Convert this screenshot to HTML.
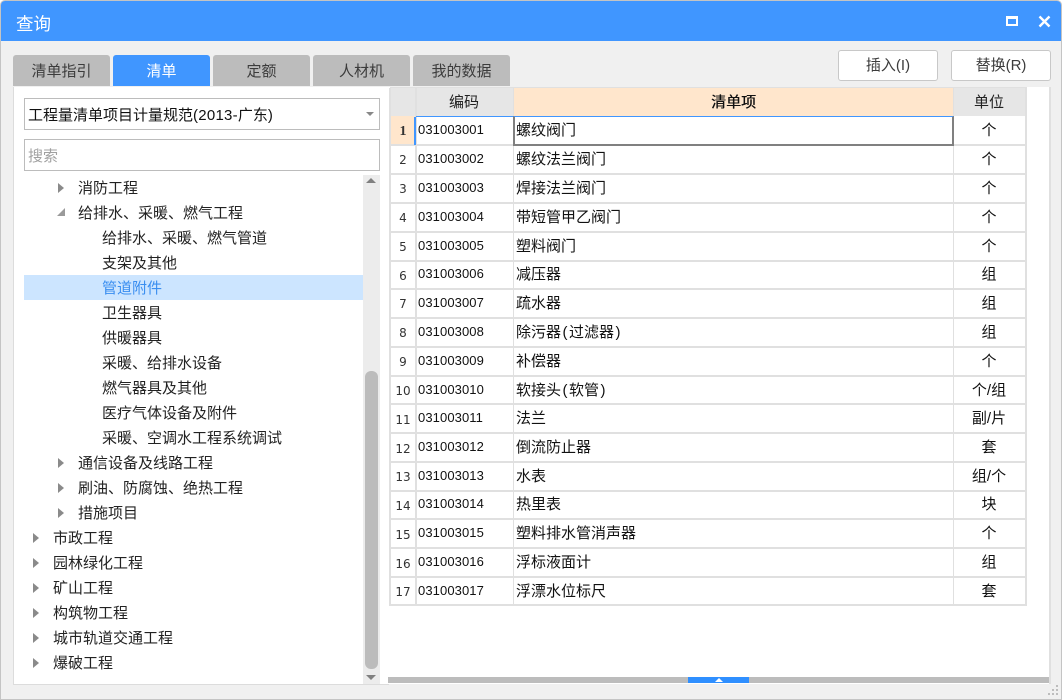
<!DOCTYPE html>
<html lang="zh"><head><meta charset="utf-8"><title>查询</title>
<style>
html,body{margin:0;padding:0;width:1062px;height:700px;overflow:hidden;background:#fff}
body{font-family:"Liberation Sans","Noto Sans CJK SC",sans-serif;font-size:15px;color:#222;position:relative}
div{position:absolute;box-sizing:border-box;white-space:nowrap}
#win{left:0;top:0;width:1062px;height:700px;background:#f0f0f0;border:1px solid #c4c4c4;border-radius:5px 5px 0 0;overflow:hidden}
#abs{left:0;top:0;width:1062px;height:700px;filter:blur(.35px)}
.tab{top:55px;width:97px;height:31px;background:#bcbcbc;border-radius:3px 3px 0 0;text-align:center;line-height:33px;color:#3c3c3c}
.btn{top:50px;width:100px;height:31px;background:#fff;border:1px solid #c8c8c8;border-radius:3px;text-align:center;line-height:29px;color:#3c3c3c}
.t{left:0;height:25px;line-height:27px;color:#222}
.a{width:0;height:0;border-left:6px solid #8a8a8a;border-top:5px solid transparent;border-bottom:5px solid transparent}
.l{background:#e0e0e0}
.c{line-height:30px;height:28px;color:#111}
.n{left:390px;width:26px;text-align:center;font-family:"DejaVu Sans",sans-serif;font-size:12px;color:#333;height:28px;line-height:30px}
.k{left:418px;font-size:13px;letter-spacing:.1px;height:28px;line-height:27px;color:#111}
.m{left:516px}
.u{left:954px;width:70px;text-align:center}
.p{padding:0 1.5px}
</style></head><body>
<div id="win"></div>
<div id="abs">
<div style="left:1px;top:1px;width:1060px;height:40px;background:#4096ff;border-radius:4px 4px 0 0"></div>
<div style="left:16px;top:12px;font-size:17.5px;line-height:24px;color:#fff">查询</div>
<div style="left:1006px;top:16px;width:12px;height:10px;border:2px solid #fff;border-top-width:3px"></div>
<svg style="position:absolute;left:1038px;top:15px" width="13" height="13" viewBox="0 0 13 13"><path d="M1.5 1.5L11.5 11.5M11.5 1.5L1.5 11.5" stroke="#fff" stroke-width="2.4" fill="none"/></svg>

<div class="tab" style="left:13px">清单指引</div>
<div class="tab" style="left:113px;background:#4096ff;color:#fff">清单</div>
<div class="tab" style="left:213px">定额</div>
<div class="tab" style="left:313px">人材机</div>
<div class="tab" style="left:413px">我的数据</div>
<div class="btn" style="left:838px">插入(I)</div>
<div class="btn" style="left:951px">替换(R)</div>

<div style="left:13px;top:87px;width:376px;height:598px;background:#fff;border:1px solid #dcdcdc;border-top:none"></div>
<div style="left:388px;top:87px;width:663px;height:597px;background:#fff;border-right:2px solid #e0e0e0"></div>

<div style="left:24px;top:98px;width:356px;height:32px;background:#fff;border:1px solid #bcbcbc;line-height:33px;padding-left:3px;color:#111">工程量清单项目计量规范<span style="letter-spacing:.25px">(2013-</span>广东)</div>
<div style="left:366px;top:112px;border-top:4px solid #888;border-left:4px solid transparent;border-right:4px solid transparent"></div>
<div style="left:24px;top:139px;width:356px;height:32px;background:#fff;border:1px solid #bcbcbc;line-height:33px;padding-left:3px;color:#a0a0a0">搜索</div>

<div style="left:24px;top:275px;width:339px;height:25px;background:#cce5ff"></div>
<div style="left:363px;top:175px;width:17px;height:509px;background:#ececec"></div>
<div style="left:365px;top:371px;width:13px;height:298px;background:#bcbcbc;border-radius:6px"></div>
<div style="left:366px;top:178px;border-bottom:5px solid #808080;border-left:5px solid transparent;border-right:5px solid transparent"></div>
<div style="left:366px;top:675px;border-top:5px solid #808080;border-left:5px solid transparent;border-right:5px solid transparent"></div>

<div class="a" style="left:58px;top:183px"></div><div class="t" style="left:78px;top:175px">消防工程</div>
<div style="left:57px;top:208px;border-bottom:8px solid #9a9a9a;border-left:8px solid transparent"></div><div class="t" style="left:78px;top:200px">给排水、采暖、燃气工程</div>
<div class="t" style="left:102px;top:225px">给排水、采暖、燃气管道</div>
<div class="t" style="left:102px;top:250px">支架及其他</div>
<div class="t" style="left:102px;top:275px;color:#3a8ef0">管道附件</div>
<div class="t" style="left:102px;top:300px">卫生器具</div>
<div class="t" style="left:102px;top:325px">供暖器具</div>
<div class="t" style="left:102px;top:350px">采暖、给排水设备</div>
<div class="t" style="left:102px;top:375px">燃气器具及其他</div>
<div class="t" style="left:102px;top:400px">医疗气体设备及附件</div>
<div class="t" style="left:102px;top:425px">采暖、空调水工程系统调试</div>
<div class="a" style="left:58px;top:458px"></div><div class="t" style="left:78px;top:450px">通信设备及线路工程</div>
<div class="a" style="left:58px;top:483px"></div><div class="t" style="left:78px;top:475px">刷油、防腐蚀、绝热工程</div>
<div class="a" style="left:58px;top:508px"></div><div class="t" style="left:78px;top:500px">措施项目</div>
<div class="a" style="left:33px;top:533px"></div><div class="t" style="left:53px;top:525px">市政工程</div>
<div class="a" style="left:33px;top:558px"></div><div class="t" style="left:53px;top:550px">园林绿化工程</div>
<div class="a" style="left:33px;top:583px"></div><div class="t" style="left:53px;top:575px">矿山工程</div>
<div class="a" style="left:33px;top:608px"></div><div class="t" style="left:53px;top:600px">构筑物工程</div>
<div class="a" style="left:33px;top:633px"></div><div class="t" style="left:53px;top:625px">城市轨道交通工程</div>
<div class="a" style="left:33px;top:658px"></div><div class="t" style="left:53px;top:650px">爆破工程</div>

<div style="left:390px;top:88px;width:636px;height:28px;background:#e6e6e6"></div>
<div style="left:514px;top:88px;width:439px;height:28px;background:#ffe6cc;text-align:center;line-height:29px;color:#111;text-shadow:.4px 0 0 #111">清单项</div>
<div style="left:416px;top:88px;width:96px;height:28px;text-align:center;line-height:29px;color:#222">编码</div>
<div style="left:954px;top:88px;width:70px;height:28px;text-align:center;line-height:29px;color:#222">单位</div>
<div style="left:390px;top:116px;width:25px;height:29px;background:#ffe6cc"></div>

<div class="l" style="left:389px;top:88px;width:2px;height:518px"></div>
<div class="l" style="left:415px;top:88px;width:2px;height:518px"></div>
<div class="l" style="left:513px;top:88px;width:1px;height:518px"></div>
<div class="l" style="left:953px;top:88px;width:1px;height:518px"></div>
<div class="l" style="left:1025px;top:88px;width:2px;height:518px"></div>
<div class="l" style="left:390px;top:87px;width:637px;height:1px"></div>
<div class="l" style="left:390px;top:144px;width:636px;height:2px"></div>
<div class="l" style="left:390px;top:173px;width:636px;height:2px"></div>
<div class="l" style="left:390px;top:202px;width:636px;height:2px"></div>
<div class="l" style="left:390px;top:231px;width:636px;height:2px"></div>
<div class="l" style="left:390px;top:260px;width:636px;height:2px"></div>
<div class="l" style="left:390px;top:288px;width:636px;height:2px"></div>
<div class="l" style="left:390px;top:317px;width:636px;height:2px"></div>
<div class="l" style="left:390px;top:346px;width:636px;height:2px"></div>
<div class="l" style="left:390px;top:375px;width:636px;height:2px"></div>
<div class="l" style="left:390px;top:403px;width:636px;height:2px"></div>
<div class="l" style="left:390px;top:432px;width:636px;height:2px"></div>
<div class="l" style="left:390px;top:461px;width:636px;height:2px"></div>
<div class="l" style="left:390px;top:490px;width:636px;height:2px"></div>
<div class="l" style="left:390px;top:518px;width:636px;height:2px"></div>
<div class="l" style="left:390px;top:547px;width:636px;height:2px"></div>
<div class="l" style="left:390px;top:576px;width:636px;height:2px"></div>
<div class="l" style="left:390px;top:604px;width:637px;height:2px"></div>

<div style="left:416px;top:116px;width:537px;height:1px;background:#4096ff"></div>
<div style="left:414px;top:117px;width:2px;height:28px;background:#4096ff"></div>
<div style="left:513px;top:116px;width:441px;height:30px;border:2px solid #808080;border-top:1px solid #4096ff;background:#fff"></div>

<div class="n" style="top:117px;font-weight:bold;font-family:'Liberation Serif',serif;font-size:14px">1</div><div class="k" style="top:116px">031003001</div><div class="c m" style="top:116px">螺纹阀门</div><div class="c u" style="top:116px">个</div>
<div class="n" style="top:145px">2</div><div class="k" style="top:145px">031003002</div><div class="c m" style="top:145px">螺纹法兰阀门</div><div class="c u" style="top:145px">个</div>
<div class="n" style="top:174px">3</div><div class="k" style="top:174px">031003003</div><div class="c m" style="top:174px">焊接法兰阀门</div><div class="c u" style="top:174px">个</div>
<div class="n" style="top:203px">4</div><div class="k" style="top:203px">031003004</div><div class="c m" style="top:203px">带短管甲乙阀门</div><div class="c u" style="top:203px">个</div>
<div class="n" style="top:232px">5</div><div class="k" style="top:232px">031003005</div><div class="c m" style="top:232px">塑料阀门</div><div class="c u" style="top:232px">个</div>
<div class="n" style="top:261px">6</div><div class="k" style="top:260px">031003006</div><div class="c m" style="top:260px">减压器</div><div class="c u" style="top:260px">组</div>
<div class="n" style="top:289px">7</div><div class="k" style="top:289px">031003007</div><div class="c m" style="top:289px">疏水器</div><div class="c u" style="top:289px">组</div>
<div class="n" style="top:318px">8</div><div class="k" style="top:318px">031003008</div><div class="c m" style="top:318px">除污器<span class="p">(</span>过滤器<span class="p">)</span></div><div class="c u" style="top:318px">组</div>
<div class="n" style="top:347px">9</div><div class="k" style="top:347px">031003009</div><div class="c m" style="top:347px">补偿器</div><div class="c u" style="top:347px">个</div>
<div class="n" style="top:376px">10</div><div class="k" style="top:376px">031003010</div><div class="c m" style="top:376px">软接头<span class="p">(</span>软管<span class="p">)</span></div><div class="c u" style="top:376px">个/组</div>
<div class="n" style="top:405px">11</div><div class="k" style="top:404px">031003011</div><div class="c m" style="top:404px">法兰</div><div class="c u" style="top:404px">副/片</div>
<div class="n" style="top:434px">12</div><div class="k" style="top:433px">031003012</div><div class="c m" style="top:433px">倒流防止器</div><div class="c u" style="top:433px">套</div>
<div class="n" style="top:462px">13</div><div class="k" style="top:462px">031003013</div><div class="c m" style="top:462px">水表</div><div class="c u" style="top:462px">组/个</div>
<div class="n" style="top:491px">14</div><div class="k" style="top:490px">031003014</div><div class="c m" style="top:490px">热里表</div><div class="c u" style="top:490px">块</div>
<div class="n" style="top:520px">15</div><div class="k" style="top:519px">031003015</div><div class="c m" style="top:519px">塑料排水管消声器</div><div class="c u" style="top:519px">个</div>
<div class="n" style="top:549px">16</div><div class="k" style="top:548px">031003016</div><div class="c m" style="top:548px">浮标液面计</div><div class="c u" style="top:548px">组</div>
<div class="n" style="top:577px">17</div><div class="k" style="top:577px">031003017</div><div class="c m" style="top:577px">浮漂水位标尺</div><div class="c u" style="top:577px">套</div>

<div style="left:388px;top:677px;width:661px;height:6px;background:#bcbcbc"></div>
<div style="left:688px;top:677px;width:61px;height:6px;background:#2f8fff"></div>
<div style="left:715px;top:678px;border-bottom:4px solid #fff;border-left:4px solid transparent;border-right:4px solid transparent"></div>

<svg style="position:absolute;left:1047px;top:684px" width="14" height="13" viewBox="0 0 14 13"><g fill="#bdbdbd"><rect x="9" y="1" width="2" height="2"/><rect x="5" y="5" width="2" height="2"/><rect x="9" y="5" width="2" height="2"/><rect x="1" y="9" width="2" height="2"/><rect x="5" y="9" width="2" height="2"/><rect x="9" y="9" width="2" height="2"/></g></svg>
</div>
</body></html>
